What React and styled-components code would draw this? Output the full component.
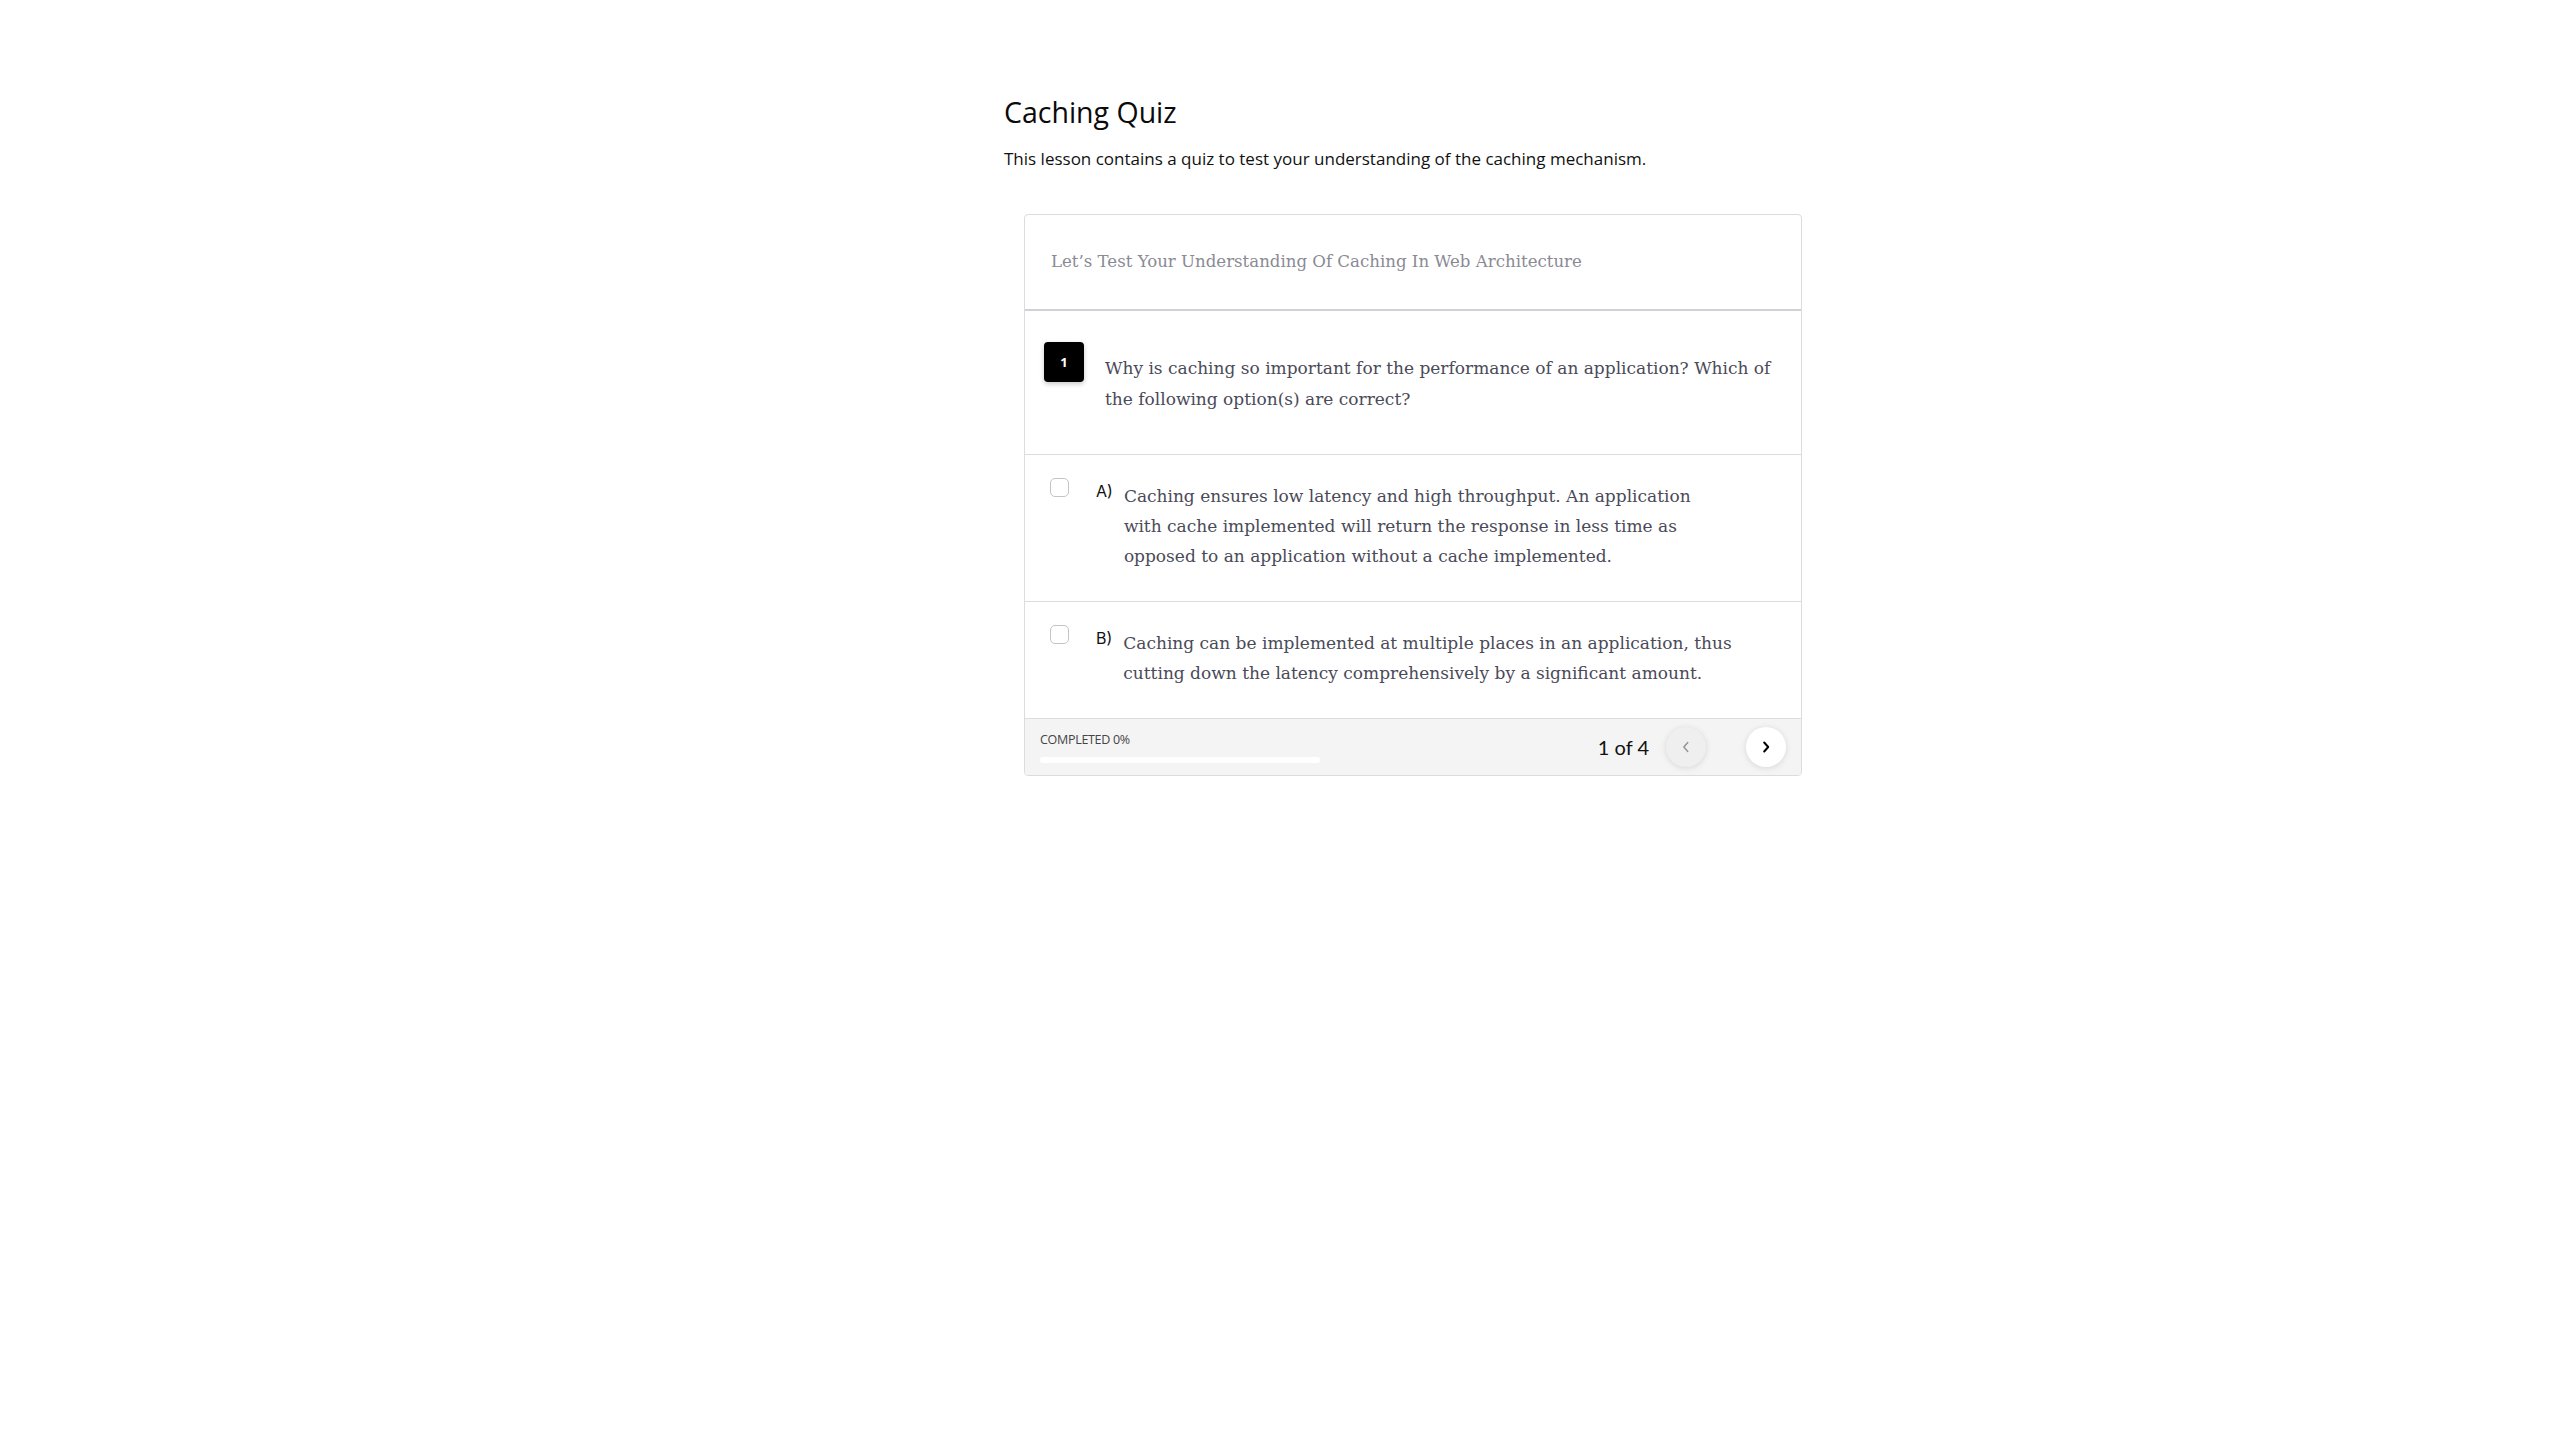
import React from 'react'
import styled, { createGlobalStyle } from 'styled-components'

const GlobalStyle = createGlobalStyle`
    html, body {
        margin: 0;
        padding: 0;
        background: #ffffff;
    }
    body {
        font-family: "Open Sans", Lato, sans-serif;
        color: #000;
    }
`

const Page = styled.div`
    min-height: 1440px;
    box-sizing: border-box;
    padding: 94px 0 0 1004px;
`

const Lesson = styled.div`
    width: 820px;
`

const Title = styled.h1`
    margin: 0;
    font-family: "Open Sans", Lato, sans-serif;
    font-weight: 400;
    font-size: 28.5px;
    line-height: 36px;
    color: #0a0a0a;
`

const Lead = styled.p`
    margin: 17px 0 0;
    font-size: 17px;
    line-height: 24px;
    color: #111;
`

const Card = styled.div`
    margin: 43px 0 0 20px;
    width: 778px;
    box-sizing: border-box;
    border: 1px solid #dcdcdc;
    border-radius: 4px;
    overflow: hidden;
`

const CardHeader = styled.div`
    padding: 35px 26px 35px;
    border-bottom: 2px solid #d0d0d6;
    font-family: "DejaVu Serif", "Liberation Serif", serif;
    font-size: 16.6px;
    line-height: 24px;
    color: #8a8a94;
`

const QuestionRow = styled.div`
    display: flex;
    align-items: flex-start;
    padding: 31px 30px 38.5px 19px;
    border-bottom: 1px solid #dcdcdc;
`

const Badge = styled.div`
    flex: none;
    width: 40px;
    height: 40px;
    border-radius: 4px;
    background: #000;
    box-shadow: 0 2px 5px rgba(0, 0, 0, 0.22);
    display: flex;
    align-items: center;
    justify-content: center;
    color: #fff;
    font-family: "Open Sans", sans-serif;
    font-weight: 700;
    font-size: 13px;
`

const SerifText = styled.div`
    font-family: "DejaVu Serif", "Liberation Serif", serif;
    font-size: 17px;
    color: #4a4a58;
`

const QuestionText = styled(SerifText)`
    margin: 11px 0 0 21px;
    line-height: 31px;
`

const OptionRow = styled.label`
    display: flex;
    align-items: flex-start;
    padding: 23px 0 ${p => (p.$last ? '30px' : '29.5px')} 25px;
    border-bottom: ${p => (p.$last ? 'none' : '1px solid #dcdcdc')};
    cursor: pointer;
`

const Check = styled.span`
    flex: none;
    width: 19px;
    height: 19px;
    box-sizing: border-box;
    border: 1px solid #c4c4c8;
    border-radius: 5px;
    background: #fff;
`

const OptionKey = styled.span`
    flex: none;
    margin: 3px 0 0 27px;
    font-family: Inter, "Liberation Sans", sans-serif;
    font-weight: 400;
    font-size: 16px;
    line-height: 20px;
    color: #111;
`

const OptionText = styled(SerifText)`
    margin: 3.5px 0 0 11px;
    line-height: 30px;
`

const Footer = styled.div`
    height: 57px;
    box-sizing: border-box;
    border-top: 1px solid #dcdcdc;
    background: #f4f4f4;
    display: flex;
    align-items: center;
    justify-content: space-between;
    padding: 0 15px;
`

const Progress = styled.div`
    display: flex;
    flex-direction: column;
    gap: 10px;
`

const ProgressLabel = styled.span`
    font-size: 12.5px;
    line-height: 15px;
    color: #444;
    letter-spacing: -0.3px;
`

const Track = styled.div`
    width: 280px;
    height: 6px;
    border-radius: 3px;
    background: #fff;
`

const Pager = styled.div`
    display: flex;
    align-items: center;
`

const Count = styled.span`
    margin-right: 17px;
    font-family: Lato, sans-serif;
    font-size: 20px;
    line-height: 24px;
    color: #111;
`

const NavButton = styled.button`
    width: 40px;
    height: 40px;
    border: none;
    border-radius: 50%;
    padding: 0;
    margin-left: ${p => (p.$gap ? '40px' : '0')};
    display: flex;
    align-items: center;
    justify-content: center;
    background: ${p => (p.$disabled ? '#efefef' : '#ffffff')};
    color: ${p => (p.$disabled ? '#8e8e96' : '#000')};
    box-shadow: 0 1px 6px rgba(0, 0, 0, 0.12);
    cursor: ${p => (p.$disabled ? 'default' : 'pointer')};
`

const Chevron = ({ dir, weight }) => (
    <svg width="16" height="16" viewBox="0 0 16 16" fill="none">
        <path
            d={dir === 'left' ? 'M9.8 3.5 L5.8 8 L9.8 12.5' : 'M6.2 3.5 L10.2 8 L6.2 12.5'}
            stroke="currentColor"
            strokeWidth={weight}
            strokeLinecap="round"
            strokeLinejoin="round"
        />
    </svg>
)

const options = [
    {
        key: 'A)',
        lines: [
            'Caching ensures low latency and high throughput. An application',
            'with cache implemented will return the response in less time as',
            'opposed to an application without a cache implemented.',
        ],
    },
    {
        key: 'B)',
        lines: [
            'Caching can be implemented at multiple places in an application, thus',
            'cutting down the latency comprehensively by a significant amount.',
        ],
    },
]

const App = () => {
    return (
        <Page>
            <GlobalStyle />
            <Lesson>
                <Title>Caching Quiz</Title>
                <Lead>This lesson contains a quiz to test your understanding of the caching mechanism.</Lead>

                <Card>
                    <CardHeader>Let’s Test Your Understanding Of Caching In Web Architecture</CardHeader>

                    <QuestionRow>
                        <Badge>1</Badge>
                        <QuestionText>
                            Why is caching so important for the performance of an application? Which of
                            <br />
                            the following option(s) are correct?
                        </QuestionText>
                    </QuestionRow>

                    {options.map((opt, i) => (
                        <OptionRow key={opt.key} $last={i === options.length - 1}>
                            <Check />
                            <OptionKey>{opt.key}</OptionKey>
                            <OptionText>
                                {opt.lines.map((line, j) => (
                                    <React.Fragment key={j}>
                                        {line}
                                        {j < opt.lines.length - 1 && <br />}
                                    </React.Fragment>
                                ))}
                            </OptionText>
                        </OptionRow>
                    ))}

                    <Footer>
                        <Progress>
                            <ProgressLabel>COMPLETED 0%</ProgressLabel>
                            <Track />
                        </Progress>
                        <Pager>
                            <Count>1 of 4</Count>
                            <NavButton $disabled aria-label="Previous">
                                <Chevron dir="left" weight={1.3} />
                            </NavButton>
                            <NavButton $gap aria-label="Next">
                                <Chevron dir="right" weight={2} />
                            </NavButton>
                        </Pager>
                    </Footer>
                </Card>
            </Lesson>
        </Page>
    )
}

export default App
